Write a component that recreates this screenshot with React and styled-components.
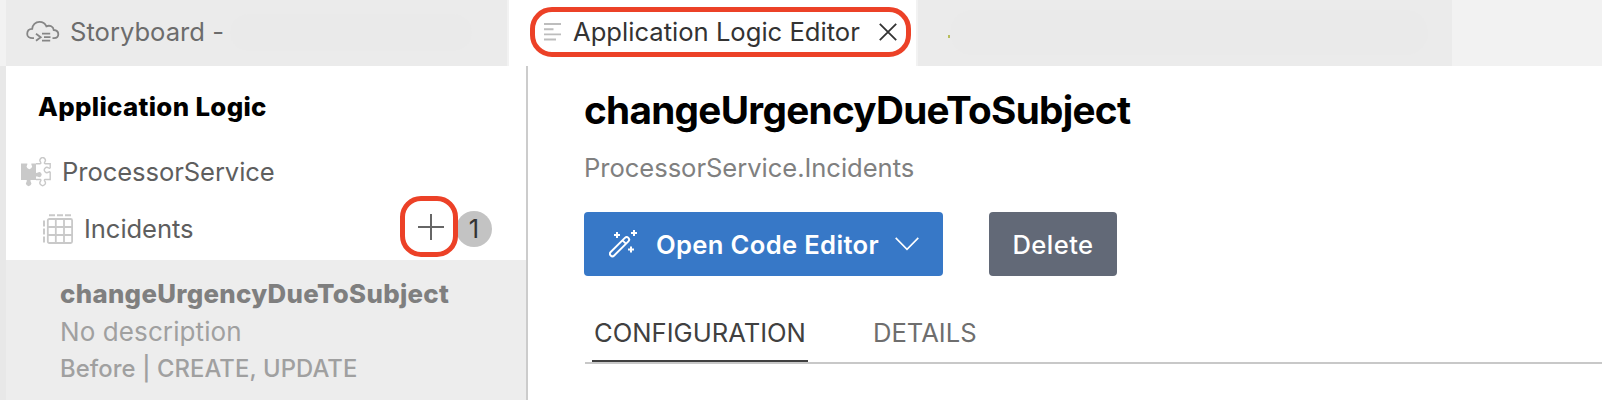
import React from "react";
import styled, { createGlobalStyle } from "styled-components";

const GlobalStyle = createGlobalStyle`
  * { box-sizing: border-box; }
  body {
    margin: 0;
    background: #fff;
    font-family: Inter, "Liberation Sans", sans-serif;
    font-size: 25.6px;
    line-height: 30px;
  }
  h1, h2, p { margin: 0; }
  svg { display: block; flex: none; }
`;

const Page = styled.div`
  display: flex;
  flex-direction: column;
  width: 1602px;
  height: 400px;
  overflow: hidden;
`;

const TabBar = styled.header`
  display: flex;
  height: 66px;
  flex: none;
  padding-left: 6px;
  background: #f2f2f2;
`;

const EditorTab = styled.div`
  display: flex;
  align-items: center;
  width: ${(p) => p.$width}px;
  padding-bottom: 2px;
  background: ${(p) => (p.$active ? "#fff" : "#ebebeb")};
  color: ${(p) => (p.$active ? "#333" : "#6c6c6c")};
  margin-right: 2px;
  white-space: nowrap;
`;

const HiddenName = styled.span`
  width: ${(p) => p.$width}px;
  height: ${(p) => p.$height}px;
  margin-left: ${(p) => p.$gap || 0}px;
  border-radius: 22px;
  background: #eaeaea;
`;

const ModifiedDot = styled.span`
  width: 2px;
  height: 3px;
  margin: 8px 0 0 30px;
  background: #b7bd5c;
`;

const TabHighlight = styled.div`
  display: flex;
  align-items: center;
  width: 381px;
  height: 50px;
  margin-left: 21px;
  padding-left: 9px;
  border: 5px solid #ec4127;
  border-radius: 22px;
`;

const TabIcon = styled.span`
  margin-left: 20px;
`;

const TabLabel = styled.span`
  margin-left: ${(p) => p.$gap}px;
`;

const CloseButton = styled.button`
  display: flex;
  margin: 0 0 0 19px;
  padding: 0;
  border: 0;
  background: none;
`;

const Body = styled.div`
  display: flex;
  flex: 1;
`;

const Sidebar = styled.aside`
  width: 528px;
  flex: none;
  border-left: 6px solid #e8e8e8;
  border-right: 2px solid #ccc;
`;

const SidebarTitle = styled.h2`
  height: 77px;
  padding: 26px 0 0 32px;
  color: #000;
  font-size: 25.8px;
  font-weight: 800;
  line-height: 30px;
  letter-spacing: 0.34px;
`;

const TreeRow = styled.div`
  display: flex;
  align-items: center;
  height: ${(p) => p.$height}px;
  padding: 0 0 ${(p) => p.$bottom || 0}px ${(p) => p.$indent}px;
  color: #5e5e5e;
`;

const TreeLabel = styled.span`
  flex: 1;
  margin-left: 11px;
  letter-spacing: -0.08px;
`;

const AddButton = styled.button`
  position: relative;
  display: flex;
  align-items: center;
  justify-content: center;
  width: 58px;
  height: 61px;
  margin: 0 0 4px;
  padding: 1px 0 0 4px;
  border: 5px solid #ec4127;
  border-radius: 21px;
  background: #fff;
`;

const CountBadge = styled.span`
  display: flex;
  align-items: center;
  justify-content: center;
  width: 36px;
  height: 36px;
  margin: 0 34px 0 -2px;
  border-radius: 50%;
  background: #c3c3c3;
  color: #333;
`;

const HandlerItem = styled.div`
  height: 140px;
  padding: 15px 0 0 54px;
  background: #ededed;
`;

const HandlerName = styled.div`
  margin-bottom: 1px;
  color: #7f7f7f;
  font-size: 25.8px;
  font-weight: 800;
  line-height: 37px;
  letter-spacing: 0.32px;
`;

const HandlerText = styled.div`
  color: #a0a0a0;
  font-size: ${(p) => (p.$small ? 23.8 : 26)}px;
  font-weight: ${(p) => (p.$small ? 500 : 400)};
  line-height: 37px;
  letter-spacing: ${(p) => (p.$small ? 0.1 : 0.1)}px;
`;

const Main = styled.main`
  flex: 1;
  padding: 20px 0 0 56px;
`;

const Title = styled.h1`
  color: #000;
  font-size: 38.7px;
  font-weight: 700;
  line-height: 48px;
  letter-spacing: -0.7px;
`;

const Subtitle = styled.p`
  margin-top: 19px;
  color: #808080;
  letter-spacing: -0.05px;
`;

const Actions = styled.div`
  display: flex;
  gap: 46px;
  margin-top: 29px;
`;

const Button = styled.button`
  display: flex;
  align-items: center;
  justify-content: ${(p) => (p.$primary ? "flex-start" : "center")};
  width: ${(p) => (p.$primary ? 359 : 128)}px;
  height: 64px;
  padding: 0 0 0 ${(p) => (p.$primary ? 25 : 0)}px;
  border: 0;
  border-radius: 4px;
  background: ${(p) => (p.$primary ? "#3778c7" : "#626977")};
  color: #fff;
  font: ${(p) => (p.$primary ? 600 : 500)} 25.6px/30px Inter, sans-serif;
  letter-spacing: ${(p) => (p.$primary ? 0.34 : 0.45)}px;
`;

const ButtonLabel = styled.span`
  padding-top: 2px;
  margin: ${(p) => (p.$spaced ? "0 16px 0 19px" : "0")};
`;

const TabList = styled.nav`
  display: flex;
  gap: 63px;
  margin-left: 1px;
  padding: 42px 0 0 7px;
  border-bottom: 2px solid #c8c8c8;
`;

const SectionTab = styled.div`
  height: 44px;
  width: ${(p) => (p.$active ? "216px" : "auto")};
  padding-left: 2px;
  border-bottom: 2px solid ${(p) => (p.$active ? "#404040" : "transparent")};
  color: ${(p) => (p.$active ? "#404040" : "#6e6e6e")};
`;

const CloudIcon = () => (
  <svg width="34" height="24" viewBox="0 0 34 24" fill="none" stroke="#868686" strokeWidth="1.8">
    <path d="M8 18.200H6.500C3.500 18.200 1.200 16.400 1.200 14c0-2.900 2-5 5-5.100C6.400 4.800 9.500 1.900 13.500 1.900c3.300 0 5.700 1.700 6.900 4.400 3.500-1.500 7 .3 7.300 3.700 3 .2 4.600 2 4.600 4.300 0 2.500-2 3.900-4.300 3.900H26.500" />
    <path d="M10 13.700l4.700 3.500-4.700 3.600M16 13.700h8.200M18 17.200h6.500M16 20.600h8.200" />
  </svg>
);

const ListIcon = () => (
  <svg width="17" height="18" viewBox="0 0 17 18" stroke="#bdbdbd" strokeWidth="1.9">
    <path d="M0 1h17M0 6.200h9.500M0 11.400h17M0 16.500h12" />
  </svg>
);

const CloseIcon = () => (
  <svg width="18" height="18" viewBox="0 0 18 18" stroke="#333" strokeWidth="1.8">
    <path d="M.8.8l16.400 16.400M17.200.8L.8 17.200" />
  </svg>
);

const PuzzleIcon = () => (
  <svg width="30" height="30" viewBox="0 0 30 30">
    <path
      fill="#c9c9c9"
      d="M0 6.500h6.100c.5.300.4.700.1 1.200a2.700 2.700 0 1 0 4.300 0c-.3-.500-.4-.900.1-1.200H15v8.900c.4.900 1.100.6 1.900.1a2.500 2.500 0 1 1 0 4.300c-.8-.5-1.500-.8-1.900.1v3.100H10c-.8.300-.7.900-.2 1.700a2.700 2.700 0 1 1-4.300 0c.5-.8.6-1.400-.2-1.700H0z"
    />
    <path
      fill="none"
      stroke="#c9c9c9"
      strokeWidth="1.400"
      d="M15 6.700h4.300c.9-.3.700-.9.200-1.700a2.700 2.700 0 1 1 4.300 0c-.5.800-.7 1.400.2 1.700h5.200v4.100c-.4.800-1 .5-1.700.1a2.600 2.600 0 1 0 0 4.200c.7-.4 1.300-.7 1.700.1v7.300H24c-.9.300-.7.900-.2 1.700a2.700 2.700 0 1 1-4.300 0c.5-.8.700-1.400-.2-1.700H15"
    />
  </svg>
);

const TableIcon = () => (
  <svg width="30" height="30" viewBox="0 0 30 30" fill="none" stroke="#c9c9c9" strokeWidth="1.800">
    <rect x="4.800" y="5" width="24.300" height="24" rx="1.500" />
    <path d="M12.800 5v24M21 5v24M4.800 13h24.300M4.800 21h24.300" />
    <path strokeWidth="2" d="M6 1.300h6M14 1.300h6M22 1.300h6M1 6.500v6M1 14.500v6M1 22.500v6" />
  </svg>
);

const PlusIcon = () => (
  <svg width="26" height="26" viewBox="0 0 26 26" stroke="#666" strokeWidth="2">
    <path d="M0 13h26M13 0v26" />
  </svg>
);

const WandIcon = () => (
  <svg width="28" height="28" viewBox="0 0 28 28" fill="none" stroke="#fff" strokeWidth="1.900">
    <path d="M1.700 22L15.900 7.800a2.450 2.450 0 0 1 3.500 3.500L5.200 25.500A2.450 2.450 0 0 1 1.700 22zM13.500 10.300l3.400 3.400" />
    <path strokeWidth="2" d="M5 5h6M8 2v6M22 3h6M25 0v6M19 19.500h6M22 16.500v6" />
  </svg>
);

const ChevronIcon = () => (
  <svg width="24" height="14" viewBox="0 0 24 14" fill="none" stroke="#fff" strokeWidth="1.600">
    <path d="M.7.900L12 12.300 23.300.900" />
  </svg>
);

export default function App() {
  return (
    <Page>
      <GlobalStyle />
      <TabBar>
        <EditorTab $width={501}>
          <TabIcon>
            <CloudIcon />
          </TabIcon>
          <TabLabel $gap={10}>Storyboard -</TabLabel>
          <HiddenName $width={242} $height={37} $gap={6} />
        </EditorTab>
        <EditorTab $width={407} $active>
          <TabHighlight>
            <ListIcon />
            <TabLabel $gap={12}>Application Logic Editor</TabLabel>
            <CloseButton aria-label="Close">
              <CloseIcon />
            </CloseButton>
          </TabHighlight>
        </EditorTab>
        <EditorTab $width={534}>
          <ModifiedDot />
          <HiddenName $width={478} $height={45} />
        </EditorTab>
      </TabBar>
      <Body>
        <Sidebar>
          <SidebarTitle>Application Logic</SidebarTitle>
          <TreeRow $height={58} $indent={15}>
            <PuzzleIcon />
            <TreeLabel>ProcessorService</TreeLabel>
          </TreeRow>
          <TreeRow $height={59} $bottom={4} $indent={37}>
            <TableIcon />
            <TreeLabel>Incidents</TreeLabel>
            <AddButton aria-label="Add">
              <PlusIcon />
            </AddButton>
            <CountBadge>1</CountBadge>
          </TreeRow>
          <HandlerItem>
            <HandlerName>changeUrgencyDueToSubject</HandlerName>
            <HandlerText>No description</HandlerText>
            <HandlerText $small>Before | CREATE, UPDATE</HandlerText>
          </HandlerItem>
        </Sidebar>
        <Main>
          <Title>changeUrgencyDueToSubject</Title>
          <Subtitle>ProcessorService.Incidents</Subtitle>
          <Actions>
            <Button $primary>
              <WandIcon />
              <ButtonLabel $spaced>Open Code Editor</ButtonLabel>
              <ChevronIcon />
            </Button>
            <Button>
              <ButtonLabel>Delete</ButtonLabel>
            </Button>
          </Actions>
          <TabList>
            <SectionTab $active>CONFIGURATION</SectionTab>
            <SectionTab>DETAILS</SectionTab>
          </TabList>
        </Main>
      </Body>
    </Page>
  );
}
